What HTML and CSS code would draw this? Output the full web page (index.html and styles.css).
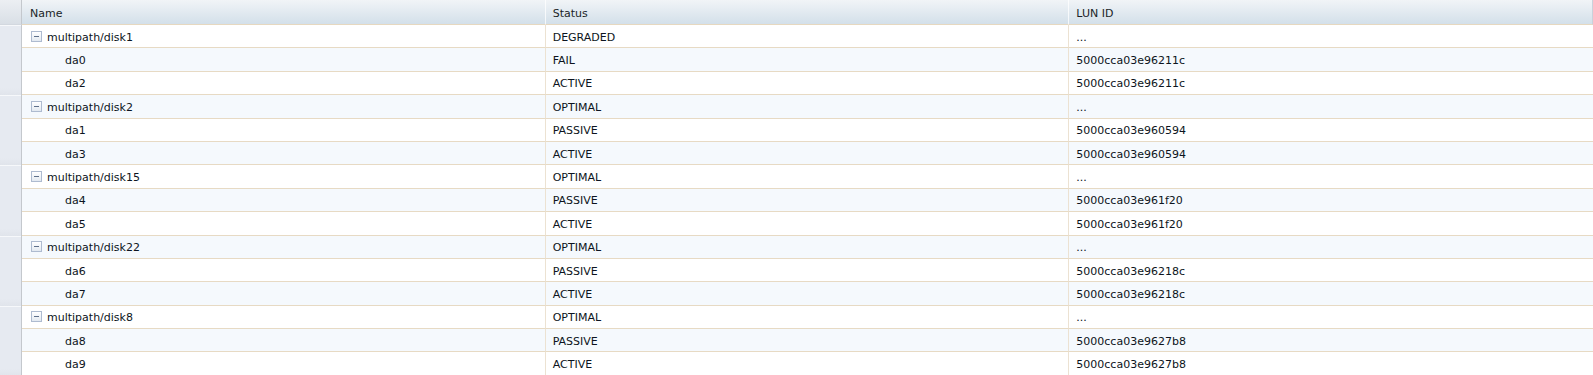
FILE: index.html
```html
<!DOCTYPE html>
<html>
<head>
<meta charset="utf-8">
<link rel="stylesheet" href="styles.css">
</head>
<body>
<div class="grid">
  <div class="row head">
    <div class="gut"></div>
    <div class="cell name">Name</div>
    <div class="cell">Status</div>
    <div class="cell last">LUN ID</div>
  </div>

  <div class="row odd"><div class="gut start"></div><div class="cell name"><span class="tog"></span>multipath/disk1</div><div class="cell">DEGRADED</div><div class="cell last">...</div></div>
  <div class="row even"><div class="gut"></div><div class="cell name child">da0</div><div class="cell">FAIL</div><div class="cell last">5000cca03e96211c</div></div>
  <div class="row odd"><div class="gut end"></div><div class="cell name child">da2</div><div class="cell">ACTIVE</div><div class="cell last">5000cca03e96211c</div></div>

  <div class="row even"><div class="gut start"></div><div class="cell name"><span class="tog"></span>multipath/disk2</div><div class="cell">OPTIMAL</div><div class="cell last">...</div></div>
  <div class="row odd"><div class="gut"></div><div class="cell name child">da1</div><div class="cell">PASSIVE</div><div class="cell last">5000cca03e960594</div></div>
  <div class="row even"><div class="gut end"></div><div class="cell name child">da3</div><div class="cell">ACTIVE</div><div class="cell last">5000cca03e960594</div></div>

  <div class="row odd"><div class="gut start"></div><div class="cell name"><span class="tog"></span>multipath/disk15</div><div class="cell">OPTIMAL</div><div class="cell last">...</div></div>
  <div class="row even"><div class="gut"></div><div class="cell name child">da4</div><div class="cell">PASSIVE</div><div class="cell last">5000cca03e961f20</div></div>
  <div class="row odd"><div class="gut end"></div><div class="cell name child">da5</div><div class="cell">ACTIVE</div><div class="cell last">5000cca03e961f20</div></div>

  <div class="row even"><div class="gut start"></div><div class="cell name"><span class="tog"></span>multipath/disk22</div><div class="cell">OPTIMAL</div><div class="cell last">...</div></div>
  <div class="row odd"><div class="gut"></div><div class="cell name child">da6</div><div class="cell">PASSIVE</div><div class="cell last">5000cca03e96218c</div></div>
  <div class="row even"><div class="gut end"></div><div class="cell name child">da7</div><div class="cell">ACTIVE</div><div class="cell last">5000cca03e96218c</div></div>

  <div class="row odd"><div class="gut start"></div><div class="cell name"><span class="tog"></span>multipath/disk8</div><div class="cell">OPTIMAL</div><div class="cell last">...</div></div>
  <div class="row even"><div class="gut"></div><div class="cell name child">da8</div><div class="cell">PASSIVE</div><div class="cell last">5000cca03e9627b8</div></div>
  <div class="row odd"><div class="gut end"></div><div class="cell name child">da9</div><div class="cell">ACTIVE</div><div class="cell last">5000cca03e9627b8</div></div>
</div>
</body>
</html>
```

FILE: styles.css
```css
html, body {
  margin: 0;
  padding: 0;
  background: #ffffff;
  overflow: hidden;
}

.grid {
  width: 1593px;
  font-family: "DejaVu Sans", "Liberation Sans", sans-serif;
  font-size: 11px;
  color: #0c1420;
}

.row {
  display: grid;
  grid-template-columns: 22px 1fr 1fr 1fr;
  height: 23.4px;
}

.row.head {
  height: 25px;
  background: linear-gradient(#f1f4f7, #d2dfe9);
}

.row.even .cell {
  background: #f5f9fd;
}

.gut {
  background: #e6eaf1;
  border-right: 1px solid #c4c8cd;
  box-sizing: border-box;
}

.head .gut {
  background: linear-gradient(#eceff3, #d9dfe6);
  border-bottom: 1px solid #d3d8df;
}

.gut.start {
  box-shadow: inset 0 1px 0 #f6f8fb;
}

.gut.end {
  background: linear-gradient(#e6eaf1 70%, #e0e4eb);
}

.cell {
  display: flex;
  align-items: center;
  box-sizing: border-box;
  padding: 2px 7px 0;
  border-right: 1px solid #ece2d2;
  border-bottom: 1px solid #e7dac4;
  white-space: nowrap;
  overflow: hidden;
}

.cell.name {
  padding-left: 8px;
}

.cell.child {
  padding-left: 43px;
}

.cell.last {
  border-right: none;
}

.head .cell {
  border-right: 1px solid rgba(255, 255, 255, 0.75);
  border-bottom: 1px solid #e6d8c0;
  color: #1a1f27;
}

.head .cell.last {
  border-right: 1px solid #c9d2db;
}

.tog {
  position: relative;
  display: inline-block;
  box-sizing: border-box;
  width: 11px;
  height: 11px;
  margin-left: 1px;
  margin-right: 5px;
  margin-top: -2px;
  border: 1px solid #aebbd0;
  background: linear-gradient(#ffffff, #e3e9f1);
}

.tog::after {
  content: "";
  position: absolute;
  left: 2px;
  top: 4px;
  width: 5px;
  height: 1px;
  background: #5f708a;
}
```
